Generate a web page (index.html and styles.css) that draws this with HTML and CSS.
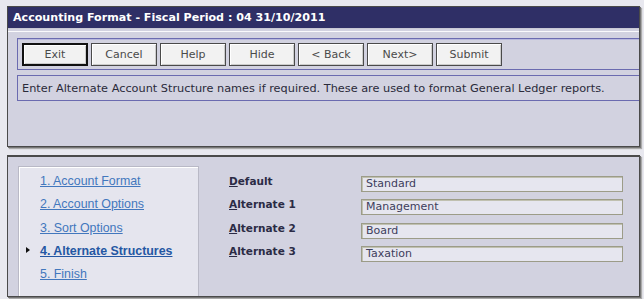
FILE: index.html
```html
<!DOCTYPE html>
<html>
<head>
<meta charset="utf-8">
<link rel="stylesheet" href="styles.css">
</head>
<body>
<div class="win top">
  <div class="title">Accounting Format - Fiscal Period : 04 31/10/2011</div>
  <div class="sep"></div>
  <div class="toolbar">
    <button class="btn focus">Exit</button>
    <button class="btn">Cancel</button>
    <button class="btn">Help</button>
    <button class="btn">Hide</button>
    <button class="btn">&lt; Back</button>
    <button class="btn">Next&gt;</button>
    <button class="btn">Submit</button>
  </div>
  <div class="msg">Enter Alternate Account Structure names if required. These are used to format General Ledger reports.</div>
</div>
<div class="win bottom">
  <div class="nav">
    <a class="step" href="#">1. Account Format</a>
    <a class="step" href="#">2. Account Options</a>
    <a class="step" href="#">3. Sort Options</a>
    <a class="step active" href="#">4. Alternate Structures</a>
    <a class="step" href="#">5. Finish</a>
  </div>
  <div class="form">
    <label class="lbl"><u>D</u>efault</label><div class="field">Standard</div>
    <label class="lbl"><u>A</u>lternate 1</label><div class="field">Management</div>
    <label class="lbl"><u>A</u>lternate 2</label><div class="field">Board</div>
    <label class="lbl"><u>A</u>lternate 3</label><div class="field">Taxation</div>
  </div>
</div>
</body>
</html>
```
FILE: styles.css
```css
html, body {
  margin: 0;
  padding: 0;
}
body {
  background: #e8e8ef;
  font-family: "DejaVu Sans", Verdana, sans-serif;
  font-size: 11px;
  width: 644px;
  height: 299px;
  overflow: hidden;
  padding: 6px 0 0 7px;
  box-sizing: border-box;
}
.win {
  width: 633px;
  box-sizing: border-box;
  border: 1px solid #4a4a4a;
  background: #d2d2e0;
  box-shadow: 1px 1px 0 #777, 2px 2px 1px #aaa;
  overflow: hidden;
}
.top {
  height: 141px;
}
.title {
  height: 21px;
  line-height: 22px;
  background: #2f2f66;
  color: #fff;
  font-weight: bold;
  font-size: 11.1px;
  padding-left: 5px;
  white-space: nowrap;
  border-bottom: 1px solid #c8c8d4;
}
.sep {
  margin-top: 2px;
  border-top: 1px solid #fafafc;
  height: 0;
}
.toolbar {
  margin: 6px 0 0 9px;
  height: 28px;
  border: 1px solid #6b6bb0;
  border-right: none;
  box-shadow: inset 0 1px 0 #b8b8dc;
  padding: 2px 0 0 4px;
  display: flex;
  gap: 3px;
  box-sizing: content-box;
}
.btn {
  width: 66px;
  height: 23px;
  margin-top: 2px;
  box-sizing: border-box;
  background: #f2f2f2;
  border: 1px solid #4a4a4a;
  box-shadow: inset 1px 1px 0 #fff, inset -1px -1px 0 #ccc;
  font-family: "DejaVu Sans", Verdana, sans-serif;
  font-size: 11px;
  color: #4a4a4a;
  padding: 0;
}
.btn.focus {
  border: 2px solid #111;
}
.msg {
  margin: 5px 0 0 9px;
  height: 24px;
  line-height: 25px;
  border: 1px solid #6b6bb0;
  border-right: none;
  padding-left: 4px;
  color: #2a2a3a;
  white-space: nowrap;
  font-size: 11.3px;
}
.bottom {
  margin-top: 8px;
  height: 142px;
  display: flex;
  padding: 9px 0 0 10px;
  border-width: 2px 1px 1px 1px;
}
.nav {
  width: 181px;
  box-sizing: border-box;
  background: #e5e5ee;
  border: 1px solid #b9b9c6;
  border-bottom: none;
  box-shadow: inset 1px 1px 0 #fff;
  padding: 6px 0 0 21px;
  display: flex;
  flex-direction: column;
  align-items: flex-start;
}
.step {
  font-family: "Liberation Sans", Arial, sans-serif;
  font-size: 12.4px;
  line-height: 16px;
  height: 23.3px;
  color: #4277bd;
  text-decoration: underline;
  position: relative;
}
.step.active {
  font-weight: bold;
  color: #2457a3;
}
.step.active::before {
  content: "";
  position: absolute;
  left: -14px;
  top: 4px;
  border-left: 4px solid #111;
  border-top: 3.5px solid transparent;
  border-bottom: 3.5px solid transparent;
}
.form {
  margin: 10px 0 0 30px;
  display: grid;
  grid-template-columns: 132px 262px;
  grid-auto-rows: 16px;
  row-gap: 7.3px;
  align-content: start;
  align-items: center;
}
.lbl {
  font-weight: bold;
  font-size: 10.5px;
  color: #2b2b45;
  margin-top: -6px;
}
.lbl u {
  text-decoration: underline;
}
.field {
  height: 16px;
  box-sizing: border-box;
  border: 1px solid #9c9c88;
  box-shadow: inset 1px 1px 0 #c0c0b0;
  background: #e6e6ef;
  color: #3d3d5c;
  padding-left: 4px;
  line-height: 14px;
}
```
